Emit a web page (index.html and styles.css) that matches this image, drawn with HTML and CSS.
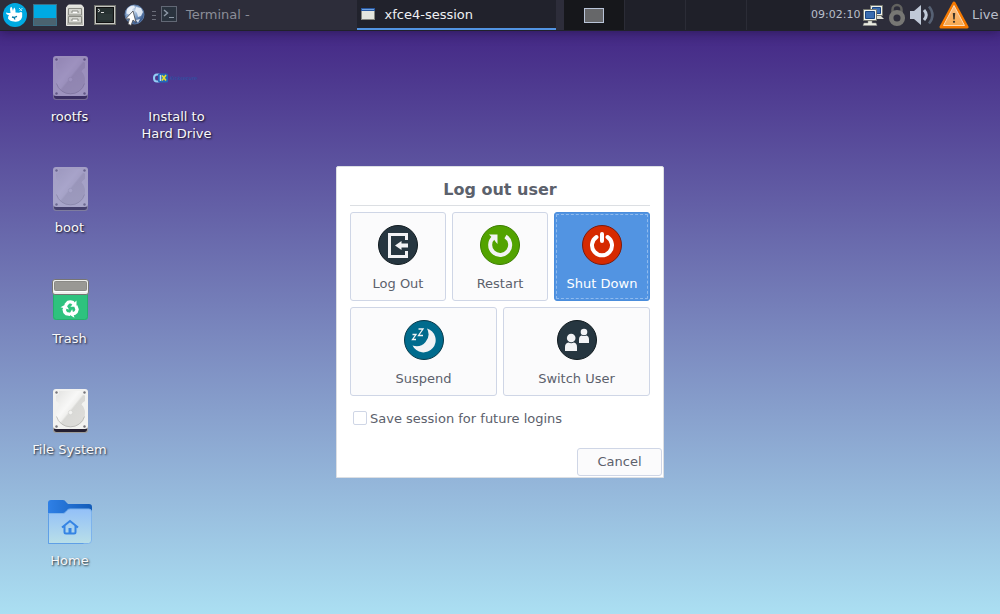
FILE: index.html
```html
<!DOCTYPE html>
<html lang="en">
<head>
<meta charset="utf-8">
<title>Log out user</title>
<link rel="stylesheet" href="styles.css">
</head>
<body>
<svg class="defs" aria-hidden="true">
  <defs>
    <linearGradient id="plate" x1="0" y1="0" x2="1" y2="1">
      <stop offset="0" stop-color="#e2e2e0"/><stop offset=".4" stop-color="#f8f8f7"/><stop offset=".5" stop-color="#f0f0ee"/><stop offset=".54" stop-color="#d9d9d6"/><stop offset="1" stop-color="#deddda"/>
    </linearGradient>
    <linearGradient id="folder" x1="0" y1="0" x2="0" y2="1">
      <stop offset="0" stop-color="#93c0f8"/><stop offset="1" stop-color="#b9dfe8"/>
    </linearGradient>
    <linearGradient id="folder-back" x1="0" y1="0" x2="1" y2="0">
      <stop offset="0" stop-color="#2f80e6"/><stop offset="1" stop-color="#125cb8"/>
    </linearGradient>
    <linearGradient id="metal" x1="0" y1="0" x2="0" y2="1">
      <stop offset="0" stop-color="#e4e5df"/><stop offset="1" stop-color="#b4b5ae"/>
    </linearGradient>
    <radialGradient id="globe" cx=".35" cy=".3" r=".75">
      <stop offset="0" stop-color="#dce8f5"/><stop offset=".55" stop-color="#7b9cc6"/><stop offset="1" stop-color="#2c4b80"/>
    </radialGradient>
    <linearGradient id="warn" x1="0" y1="0" x2="0" y2="1">
      <stop offset="0" stop-color="#fcbf86"/><stop offset="1" stop-color="#f9a94f"/>
    </linearGradient>
    <symbol id="drive" viewBox="0 0 48 48">
      <rect x="7" y="5" width="35" height="41" rx="3" fill="#9c9b98"/>
      <path d="M8 41h33v2q-.5 2-2.500 2h-28Q8.500 45 8 43z" fill="#241f31"/>
      <rect x="7" y="2" width="35" height="40" rx="3" fill="#f2f2f0"/>
      <path d="M13 4h23q-.5 4 3 4.500V14q-3 1.500-3.500 3.500 3.500 3.500 3.500 8.500a14.500 14 0 0 1-29 0q0-5 3.500-8.500Q13 15.500 10 14V8.500q3.500-.5 3-4.500z" fill="url(#plate)"/>
      <path d="M10.500 29.500a14.500 14 0 0 0 28 0" fill="none" stroke="#b3b2af" stroke-width=".8"/>
      <circle cx="24.500" cy="25.500" r="2.200" fill="#f3f3f1" stroke="#c8c8c6" stroke-width=".5"/>
      <g fill="#77767b"><circle cx="10.500" cy="5.500" r="1.200"/><circle cx="38.500" cy="5.500" r="1.200"/><circle cx="10.500" cy="39.500" r="1.200"/><circle cx="38.500" cy="39.500" r="1.200"/></g>
    </symbol>
    <g id="recycle-arrow" transform="translate(24.500 32.500)">
      <path d="M-5 -3.200L-2.400 -6.200Q0 -7.200 2.200 -6L3.200 -4.400" fill="none" stroke="#fff" stroke-width="3.400"/>
      <path d="M6 -8V-1.800H-.2z" fill="#fff"/>
    </g>
  </defs>
</svg>

<header class="panel">
  <nav class="launchers" aria-label="Launchers">
    <button class="launcher" aria-label="Applications menu">
      <svg width="24" height="24" viewBox="0 0 24 24"><circle cx="12" cy="12" r="12" fill="#00aae2"/><path d="M3 9.500q2 .6 4.500 .6L7 6Q7.200 4 8.500 3.800 9.500 5.500 10 8q.2-3 1.500-3.500 1.200 2 1 5l3.500 .3q2.500-1.500 3.200 .2 .5 4-1.200 6.500Q15 19.500 11 18.500 7 18.500 5 15.500 5 13 6 12 3 11.500 3 9.500z" fill="#fff"/><path d="M16 5l3 3m.500-3l-3 3" stroke="#c5edfa"/><path d="M9 14l2 .5 3-1.200M11 14.500l1 2" fill="none" stroke="#087faa" stroke-width="1.300"/></svg>
    </button>
    <button class="launcher" aria-label="Show desktop">
      <svg width="24" height="24" viewBox="0 0 24 24"><rect x=".5" y="1.500" width="23" height="21" fill="#4a6370" stroke="#3d6f85"/><path d="M1 2h22v13H1z" fill="#00aae2"/></svg>
    </button>
    <button class="launcher" aria-label="File manager">
      <svg width="24" height="24" viewBox="0 0 24 24"><path d="M3.500 4.500l2-2.500h13l2 2.500v18h-17z" fill="url(#metal)" stroke="#e9e9e4"/><path d="M5.500 5.500h13v6.500h-13zM5.500 13.500h13V20h-13z" fill="#d4d5cf" stroke="#8b8c85"/><path d="M9 10V8h6v2M9 18v-2h6v2" fill="#fff" stroke="#888982"/></svg>
    </button>
    <button class="launcher" aria-label="Terminal emulator">
      <svg width="24" height="24" viewBox="0 0 24 24"><rect x="1.500" y="2.500" width="21" height="19" fill="#c4c5c0" stroke="#71736e"/><rect x="3.500" y="4.500" width="17" height="15" fill="#273131" stroke="#111"/><path d="M5 6l2 1.500L5 9M8 9.500h3" fill="none" stroke="#dedede"/><path d="M5 12h14M5 14h14M5 16h14" stroke="#354141"/></svg>
    </button>
    <button class="launcher" aria-label="Web browser">
      <svg width="24" height="24" viewBox="0 0 24 24"><circle cx="11.500" cy="11.500" r="9.500" fill="url(#globe)" stroke="#5b7ba8"/><path d="M4 6q3-4 7-3.500l1 2-3 2 .5 2-3 3-3-1zM13 4l5 1 2 4-2 4-3 1-1-4-2-2zM13 17l4-1-2 4z" fill="#f0f5fb" opacity=".85"/><path d="M10 8L2.500 16l4-.2L5 21l3 1.500L10 17l3 2.500z" fill="#fff" stroke="#47484d" stroke-width=".8"/></svg>
    </button>
  </nav>
  <span class="handle"></span>
  <nav class="tasks" aria-label="Windows">
    <button class="task">
      <svg width="16" height="16" viewBox="0 0 16 16"><rect x=".5" y=".5" width="15" height="15" fill="#2a333e" stroke="#626875"/><path d="M3 4l3.500 3L3 10" fill="none" stroke="#8e99a7" stroke-width="1.500"/><path d="M8 11.500h5" stroke="#8e99a7"/></svg>
      <span>Terminal -</span>
    </button>
    <button class="task active">
      <svg width="16" height="16" viewBox="0 0 16 16"><rect x="1.500" y="2.500" width="13" height="11" fill="#e4e6df" stroke="#858780"/><path d="M1 2h14v3H1z" fill="#2858a0"/><path d="M2 3.500h12" stroke="#6ea1e2"/></svg>
      <span>xfce4-session</span>
    </button>
  </nav>
  <nav class="pager" aria-label="Workspaces">
    <button class="workspace current" aria-label="Workspace 1"><span class="mini-window"></span></button>
    <button class="workspace" aria-label="Workspace 2"></button>
    <button class="workspace" aria-label="Workspace 3"></button>
    <button class="workspace" aria-label="Workspace 4"></button>
  </nav>
  <div class="tray">
    <time class="clock">09:02:10</time>
    <svg class="network" width="22" height="22" viewBox="0 0 22 22"><path d="M8.500 1.500h12v10h-12z" fill="#f0f1e9" stroke="#77786f"/><path d="M10.500 3.500h8v6h-8z" fill="#3a6caf" stroke="#194482"/><path d="M14 12h5l3 3h-8z" fill="#deded3"/><path d="M1.500 5.500h13v11h-13z" fill="#f5f6ed" stroke="#77786f"/><path d="M3.500 7.500h9v7h-9z" fill="#3a6caf" stroke="#194482"/><path d="M6 17h4v2h4l1 2.500H1L2 19h4z" fill="#e9eadf" stroke="#90918a" stroke-width=".5"/></svg>
    <svg width="22" height="24" viewBox="0 0 22 24"><path d="M6.500 11V6.500a4.500 4.500 0 0 1 9 0V11" fill="none" stroke="#62625f" stroke-width="2.500"/><circle cx="11" cy="15" r="5.800" fill="none" stroke="#777774" stroke-width="4.500"/></svg>
    <svg class="volume" width="26" height="24" viewBox="0 0 26 24"><path d="M0 8h4l7-6v20l-7-6H0z" fill="#c0c9d8"/><path d="M14 7q4.500 5 0 10" fill="none" stroke="#c0c9d8" stroke-width="3"/><path d="M19 3.500q7 8.500 0 17" fill="none" stroke="#566174" stroke-width="2.500"/></svg>
    <svg width="30" height="28" viewBox="0 0 30 28"><path d="M15 2L28 26H2z" fill="#f57900" stroke="#f57900" stroke-width="3" stroke-linejoin="round"/><path d="M15 4.500L25.500 24.500h-21z" fill="url(#warn)" stroke="#fddab7" stroke-linejoin="round"/><path d="M13.800 12h2.400l-.5 6.500h-1.400z" fill="#3d3328"/><circle cx="15" cy="20.800" r="1.100" fill="#3d3328"/></svg>
    <span class="live">Live</span>
  </div>
</header>

<main class="desktop">
  <div class="icons">
    <a class="item" href="#rootfs"><svg class="unmounted" width="48" height="48"><use href="#drive"/></svg><span>rootfs</span></a>
    <a class="item" href="#boot"><svg class="unmounted" width="48" height="48"><use href="#drive"/></svg><span>boot</span></a>
    <a class="item" href="#trash">
      <svg width="48" height="48" viewBox="0 0 48 48"><path d="M7 15h35v26q0 3-3 3H10q-3 0-3-3z" fill="#2ec27e"/><path d="M7.500 17v23.500q0 3 3 3h28q3 0 3-3V17" fill="none" stroke="#26ad6d"/><rect x="6.500" y="3.500" width="36" height="15" rx="2.500" fill="#eeeeec" stroke="#777573"/><rect x="8.500" y="5.500" width="32" height="9" rx="1" fill="#999894" stroke="#8b8a86"/><path d="M8 15.500h33" stroke="#fff"/><use href="#recycle-arrow"/><use href="#recycle-arrow" transform="rotate(120 24.500 32.500)"/><use href="#recycle-arrow" transform="rotate(240 24.500 32.500)"/></svg>
      <span>Trash</span>
    </a>
    <a class="item" href="#filesystem"><svg width="48" height="48"><use href="#drive"/></svg><span>File System</span></a>
    <a class="item" href="#home">
      <svg width="48" height="48" viewBox="0 0 48 48"><path d="M2 5q0-3 3-3h12q2 0 3 2l2 2h21q3 0 3 3v28H2z" fill="url(#folder-back)"/><path d="M2.500 15.500H17q2 0 3-2l1-1q1-1.500 3-1.500h19q2.500 0 2.500 3V42q0 3.500-3 3.500h-40z" fill="url(#folder)" stroke="#7db3ec"/><path d="M2.500 15.500v30h35" fill="none" stroke="#5f9fe6"/><path d="M16 29.500l8-6.500 8 6.500M18.500 28v6q0 1.500 1.500 1.500h8q1.500 0 1.500-1.500v-6" fill="none" stroke="#3584e4" stroke-width="2"/><path d="M22.500 30h3v6h-3z" fill="#3584e4"/></svg>
      <span>Home</span>
    </a>
    <a class="item" href="#install">
      <svg width="48" height="48" viewBox="0 0 48 48"><path d="M6.500 20.500H4q-3 0-3 3.500t3 3.500h2.500" fill="none" stroke="#93cdf5" stroke-width="2"/><rect x="5" y="19.500" width="10" height="9" rx="1.500" fill="#2368ba"/><path d="M7.500 21v6" stroke="#b9ddf8" stroke-width="1.500"/><path d="M9 21.500l4 5M13 21l-4 5.500" fill="none" stroke="#e8df2b" stroke-width="1.600"/><text class="logo-text" x="17" y="26">Kicksecure</text></svg>
      <span>Install to<br>Hard Drive</span>
    </a>
  </div>

  <section class="dialog" role="dialog" aria-labelledby="dialog-title">
    <h1 id="dialog-title">Log out user</h1>
    <div class="actions">
      <button class="action">
        <svg width="40" height="40" viewBox="0 0 40 40"><circle cx="20" cy="20" r="19.500" fill="#263640" stroke="#111b20"/><path d="M28.500 15V9.500h-17v22h17V26" fill="none" stroke="#f2f3f5" stroke-width="3"/><path d="M30 18.500v4h-6.500v2.500L17 20.500l6.500-4.500v2.500z" fill="#f2f3f5"/></svg>
        Log Out
      </button>
      <button class="action">
        <svg width="40" height="40" viewBox="0 0 40 40"><circle cx="20" cy="20" r="19.500" fill="#52a300" stroke="#3c7d00"/><path d="M25.500 11.500a10 10 0 1 1-12 1" fill="none" stroke="#f2f3f5" stroke-width="4"/><path d="M9 9.500h8.500V19q-2-2-3.500-4.500z" fill="#f2f3f5"/></svg>
        Restart
      </button>
      <button class="action selected">
        <svg width="40" height="40" viewBox="0 0 40 40"><circle cx="20" cy="20" r="19.500" fill="#d62a00" stroke="#7b1b0c"/><path d="M14.500 12a10 10 0 1 0 11 0" fill="none" stroke="#fff" stroke-width="4" stroke-linecap="round"/><path d="M20 9v7" stroke="#fff" stroke-width="4" stroke-linecap="round"/></svg>
        Shut Down
      </button>
      <button class="action wide">
        <svg width="40" height="40" viewBox="0 0 40 40"><circle cx="20" cy="20" r="19.500" fill="#006b8d" stroke="#07394a"/><path d="M23 8.500A12.200 12.200 0 1 1 8.500 25.500 12 12 0 0 0 23 8.500z" fill="#f2f3f5"/><path d="M8.500 14.500H12L8.500 19.500H12M14.500 9H19l-4.500 6.500H19" fill="none" stroke="#f2f3f5" stroke-width="1.300"/></svg>
        Suspend
      </button>
      <button class="action wide">
        <svg width="40" height="40" viewBox="0 0 40 40"><circle cx="20" cy="20" r="19.500" fill="#263640" stroke="#111b20"/><g fill="#f2f3f5"><circle cx="14.200" cy="18" r="4.300"/><path d="M8 31v-4q0-4 3.500-4.500 2.700 1.500 5.400 0Q20 23 20 27v4z"/><circle cx="27" cy="12" r="3.300"/><path d="M22 23v-3.500q0-3.500 2.800-4 2.200 1.200 4.400 0 2.800.5 2.800 4V23z"/></g></svg>
        Switch User
      </button>
    </div>
    <label class="save"><input type="checkbox">Save session for future logins</label>
    <div class="footer"><button class="cancel">Cancel</button></div>
  </section>
</main>
</body>
</html>
```

FILE: styles.css
```css
* { box-sizing: border-box; }

body {
  margin: 0;
  min-height: 100vh;
  display: flex;
  flex-direction: column;
  font: 13px/17px "DejaVu Sans", sans-serif;
  background: linear-gradient(#3f1f80, #abdff2);
  overflow: hidden;
}

button {
  font: inherit;
  color: inherit;
  border: 0;
  padding: 0;
  background: none;
}

svg { display: block; flex: none; }
.defs { position: absolute; width: 0; height: 0; }

/* Top panel */
.panel {
  display: flex;
  height: 31px;
  background: #2d2d3a;
  border-bottom: 1px solid #20212b;
  box-shadow: 0 1px 12px rgba(20, 10, 40, 0.5);
  color: #b9bfcb;
  z-index: 1;
}

.launchers { display: flex; flex: none; }

.launcher {
  width: 30px;
  display: grid;
  place-items: center;
}

.handle {
  flex: none;
  align-self: center;
  width: 4px;
  height: 9px;
  margin: 0 4px 0 2px;
  background: repeating-linear-gradient(#6b6d79 0 1px, transparent 1px 4px);
}

.tasks { display: flex; flex: 1; min-width: 0; }

.task {
  flex: 1;
  display: flex;
  align-items: center;
  gap: 9px;
  padding: 0 2px 2px 1px;
  color: #8b8d98;
  text-align: left;
}

.task.active {
  padding: 0 3px;
  color: #eff0f3;
  background: #21222c;
  border-bottom: 2px solid #5294e2;
}

.pager {
  display: grid;
  grid-template-columns: 60px 60px 60px 63px;
  gap: 1px;
  flex: none;
  margin-left: 8px;
  background: #2b2c36;
}

.workspace {
  display: grid;
  place-items: center;
  background: #1f2029;
}

.workspace.current { background: #16171b; }

.mini-window {
  width: 20px;
  height: 15px;
  border: 1px solid #b9c4d8;
  background: #666769;
}

.tray { display: flex; flex: none; align-items: center; width: 190px; padding-left: 1px; }
.clock { width: 50px; font-size: 11px; padding-bottom: 2px; }
.network { margin: 0 2px 0 1px; }
.volume { margin: 0 3px 0 2px; }
.live { margin-left: 3px; padding-bottom: 2px; }

/* Desktop */
.desktop { flex: 1; display: grid; padding-bottom: 2px; }
.icons, .dialog { grid-area: 1 / 1; }

.icons {
  display: grid;
  grid-auto-flow: column;
  grid-template-rows: repeat(5, 111px);
  grid-auto-columns: 107px;
  justify-content: start;
  padding: 23px 16px 0;
}

.item {
  display: flex;
  flex-direction: column;
  align-items: center;
  gap: 6px;
  color: #f8f8fa;
  text-align: center;
  text-decoration: none;
  text-shadow: 1px 1px 2px rgba(0, 0, 0, 0.8);
}

.unmounted { opacity: 0.48; }

.logo-text {
  font: italic 5px "DejaVu Sans", sans-serif;
  fill: #2458a8;
  text-shadow: none;
}

/* Session dialog */
.dialog {
  place-self: center;
  width: 328px;
  padding: 10px 1px 1px;
  color: #5c616c;
  background: #fff;
  border: 1px solid #dcdfe3;
  border-radius: 2px 2px 0 0;
}

.dialog h1 {
  margin: 0 12px 6px;
  padding: 3px 0 6px;
  border-bottom: 1px solid #dcdfe3;
  font-size: 16px;
  line-height: 19px;
  text-align: center;
}

.actions {
  display: grid;
  grid-template-columns: repeat(6, 1fr);
  gap: 6px;
  margin: 0 12px;
}

.action {
  grid-column: span 2;
  height: 89px;
  display: flex;
  flex-direction: column;
  align-items: center;
  gap: 10px;
  padding-top: 12px;
  background: #fbfbfc;
  border: 1px solid #cfd6e6;
  border-radius: 3px;
}

.action.wide { grid-column: span 3; }

.action.selected {
  color: #fff;
  background: #5294e2;
  border-color: #4a8ddc;
  outline: 1px dashed #8fbaed;
  outline-offset: -3px;
}

.save {
  display: flex;
  align-items: center;
  gap: 3px;
  margin: 14px 15px 0;
}

.save input {
  appearance: none;
  width: 14px;
  height: 14px;
  margin: 0;
  background: #fff;
  border: 1px solid #cfd6e6;
  border-radius: 2px;
}

.footer { display: flex; justify-content: flex-end; margin-top: 21px; }

.cancel {
  width: 85px;
  height: 28px;
  background: #fbfbfc;
  border: 1px solid #cfd6e6;
  border-radius: 3px;
}
```
